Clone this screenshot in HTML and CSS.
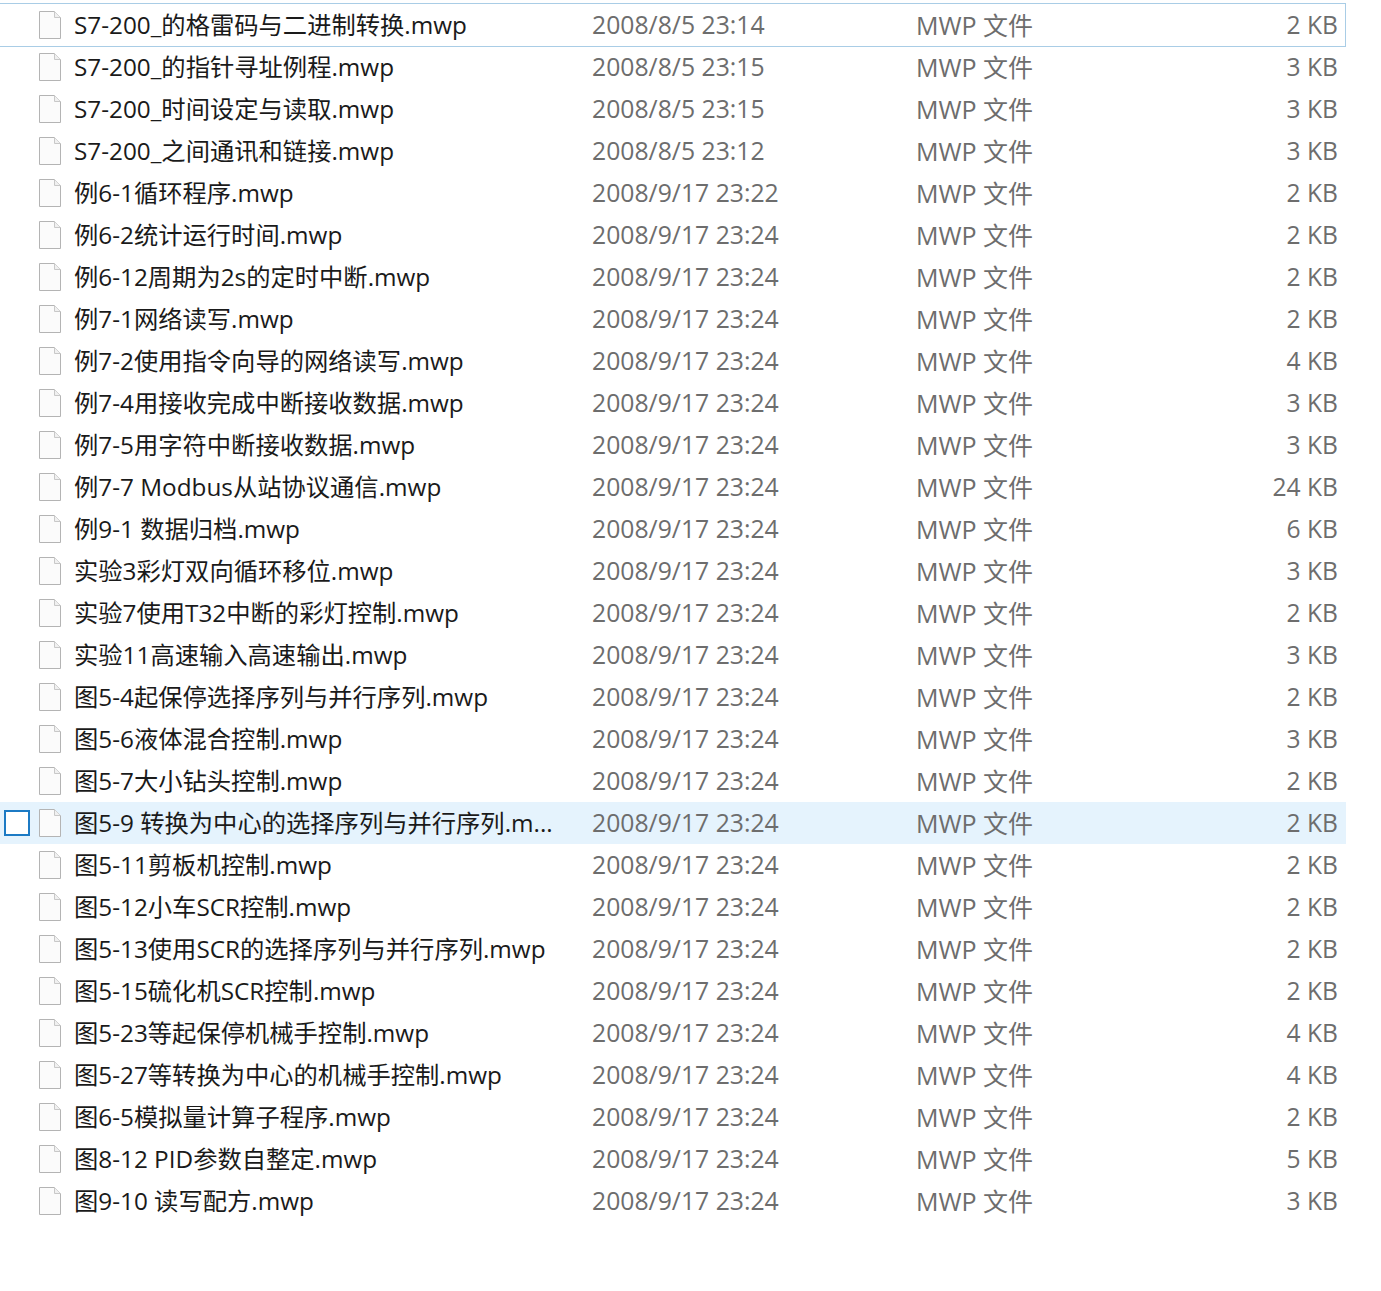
FILE: index.html
```html
<!DOCTYPE html>
<html lang="zh-CN">
<head>
    <meta charset="UTF-8">
    <title>MWP 文件</title>
    <link rel="stylesheet" href="styles.css">
</head>
<body>
    <svg class="defs" width="0" height="0">
        <symbol id="file" viewBox="0 0 22 28">
            <path d="M0.5 0.5H15.5L21.5 6.5V27.5H0.5Z" fill="#fbfbfb" stroke="#b4b4b4"/>
            <path d="M15.5 0.5V6.5H21.5" fill="#f0f0f0" stroke="#c8c8c8"/>
        </symbol>
    </svg>
    <div class="list">
        <div class="row focused"><span class="check"></span><svg class="icon"><use href="#file"/></svg><span class="name">S7-200_的格雷码与二进制转换.mwp</span><span class="date">2008/8/5 23:14</span><span class="type">MWP 文件</span><span class="size">2 KB</span></div>
        <div class="row"><span class="check"></span><svg class="icon"><use href="#file"/></svg><span class="name">S7-200_的指针寻址例程.mwp</span><span class="date">2008/8/5 23:15</span><span class="type">MWP 文件</span><span class="size">3 KB</span></div>
        <div class="row"><span class="check"></span><svg class="icon"><use href="#file"/></svg><span class="name">S7-200_时间设定与读取.mwp</span><span class="date">2008/8/5 23:15</span><span class="type">MWP 文件</span><span class="size">3 KB</span></div>
        <div class="row"><span class="check"></span><svg class="icon"><use href="#file"/></svg><span class="name">S7-200_之间通讯和链接.mwp</span><span class="date">2008/8/5 23:12</span><span class="type">MWP 文件</span><span class="size">3 KB</span></div>
        <div class="row"><span class="check"></span><svg class="icon"><use href="#file"/></svg><span class="name">例6-1循环程序.mwp</span><span class="date">2008/9/17 23:22</span><span class="type">MWP 文件</span><span class="size">2 KB</span></div>
        <div class="row"><span class="check"></span><svg class="icon"><use href="#file"/></svg><span class="name">例6-2统计运行时间.mwp</span><span class="date">2008/9/17 23:24</span><span class="type">MWP 文件</span><span class="size">2 KB</span></div>
        <div class="row"><span class="check"></span><svg class="icon"><use href="#file"/></svg><span class="name">例6-12周期为2s的定时中断.mwp</span><span class="date">2008/9/17 23:24</span><span class="type">MWP 文件</span><span class="size">2 KB</span></div>
        <div class="row"><span class="check"></span><svg class="icon"><use href="#file"/></svg><span class="name">例7-1网络读写.mwp</span><span class="date">2008/9/17 23:24</span><span class="type">MWP 文件</span><span class="size">2 KB</span></div>
        <div class="row"><span class="check"></span><svg class="icon"><use href="#file"/></svg><span class="name">例7-2使用指令向导的网络读写.mwp</span><span class="date">2008/9/17 23:24</span><span class="type">MWP 文件</span><span class="size">4 KB</span></div>
        <div class="row"><span class="check"></span><svg class="icon"><use href="#file"/></svg><span class="name">例7-4用接收完成中断接收数据.mwp</span><span class="date">2008/9/17 23:24</span><span class="type">MWP 文件</span><span class="size">3 KB</span></div>
        <div class="row"><span class="check"></span><svg class="icon"><use href="#file"/></svg><span class="name">例7-5用字符中断接收数据.mwp</span><span class="date">2008/9/17 23:24</span><span class="type">MWP 文件</span><span class="size">3 KB</span></div>
        <div class="row"><span class="check"></span><svg class="icon"><use href="#file"/></svg><span class="name">例7-7 Modbus从站协议通信.mwp</span><span class="date">2008/9/17 23:24</span><span class="type">MWP 文件</span><span class="size">24 KB</span></div>
        <div class="row"><span class="check"></span><svg class="icon"><use href="#file"/></svg><span class="name">例9-1 数据归档.mwp</span><span class="date">2008/9/17 23:24</span><span class="type">MWP 文件</span><span class="size">6 KB</span></div>
        <div class="row"><span class="check"></span><svg class="icon"><use href="#file"/></svg><span class="name">实验3彩灯双向循环移位.mwp</span><span class="date">2008/9/17 23:24</span><span class="type">MWP 文件</span><span class="size">3 KB</span></div>
        <div class="row"><span class="check"></span><svg class="icon"><use href="#file"/></svg><span class="name">实验7使用T32中断的彩灯控制.mwp</span><span class="date">2008/9/17 23:24</span><span class="type">MWP 文件</span><span class="size">2 KB</span></div>
        <div class="row"><span class="check"></span><svg class="icon"><use href="#file"/></svg><span class="name">实验11高速输入高速输出.mwp</span><span class="date">2008/9/17 23:24</span><span class="type">MWP 文件</span><span class="size">3 KB</span></div>
        <div class="row"><span class="check"></span><svg class="icon"><use href="#file"/></svg><span class="name">图5-4起保停选择序列与并行序列.mwp</span><span class="date">2008/9/17 23:24</span><span class="type">MWP 文件</span><span class="size">2 KB</span></div>
        <div class="row"><span class="check"></span><svg class="icon"><use href="#file"/></svg><span class="name">图5-6液体混合控制.mwp</span><span class="date">2008/9/17 23:24</span><span class="type">MWP 文件</span><span class="size">3 KB</span></div>
        <div class="row"><span class="check"></span><svg class="icon"><use href="#file"/></svg><span class="name">图5-7大小钻头控制.mwp</span><span class="date">2008/9/17 23:24</span><span class="type">MWP 文件</span><span class="size">2 KB</span></div>
        <div class="row hover"><span class="check"></span><svg class="icon"><use href="#file"/></svg><span class="name">图5-9 转换为中心的选择序列与并行序列.m...</span><span class="date">2008/9/17 23:24</span><span class="type">MWP 文件</span><span class="size">2 KB</span></div>
        <div class="row"><span class="check"></span><svg class="icon"><use href="#file"/></svg><span class="name">图5-11剪板机控制.mwp</span><span class="date">2008/9/17 23:24</span><span class="type">MWP 文件</span><span class="size">2 KB</span></div>
        <div class="row"><span class="check"></span><svg class="icon"><use href="#file"/></svg><span class="name">图5-12小车SCR控制.mwp</span><span class="date">2008/9/17 23:24</span><span class="type">MWP 文件</span><span class="size">2 KB</span></div>
        <div class="row"><span class="check"></span><svg class="icon"><use href="#file"/></svg><span class="name">图5-13使用SCR的选择序列与并行序列.mwp</span><span class="date">2008/9/17 23:24</span><span class="type">MWP 文件</span><span class="size">2 KB</span></div>
        <div class="row"><span class="check"></span><svg class="icon"><use href="#file"/></svg><span class="name">图5-15硫化机SCR控制.mwp</span><span class="date">2008/9/17 23:24</span><span class="type">MWP 文件</span><span class="size">2 KB</span></div>
        <div class="row"><span class="check"></span><svg class="icon"><use href="#file"/></svg><span class="name">图5-23等起保停机械手控制.mwp</span><span class="date">2008/9/17 23:24</span><span class="type">MWP 文件</span><span class="size">4 KB</span></div>
        <div class="row"><span class="check"></span><svg class="icon"><use href="#file"/></svg><span class="name">图5-27等转换为中心的机械手控制.mwp</span><span class="date">2008/9/17 23:24</span><span class="type">MWP 文件</span><span class="size">4 KB</span></div>
        <div class="row"><span class="check"></span><svg class="icon"><use href="#file"/></svg><span class="name">图6-5模拟量计算子程序.mwp</span><span class="date">2008/9/17 23:24</span><span class="type">MWP 文件</span><span class="size">2 KB</span></div>
        <div class="row"><span class="check"></span><svg class="icon"><use href="#file"/></svg><span class="name">图8-12 PID参数自整定.mwp</span><span class="date">2008/9/17 23:24</span><span class="type">MWP 文件</span><span class="size">5 KB</span></div>
        <div class="row"><span class="check"></span><svg class="icon"><use href="#file"/></svg><span class="name">图9-10 读写配方.mwp</span><span class="date">2008/9/17 23:24</span><span class="type">MWP 文件</span><span class="size">3 KB</span></div>
    </div>
</body>
</html>
```
FILE: styles.css
```css
body {
    font-family: "Open Sans", "Noto Sans CJK SC", sans-serif;
    font-size: 25px;
    background-color: #ffffff;
    margin: 0;
    padding-top: 4px;
}

.defs {
    position: absolute;
}

.list {
    width: 1346px;
}

.row {
    display: flex;
    align-items: center;
    height: 42px;
    box-sizing: border-box;
}

.row.focused {
    height: 44px;
    margin-top: -1px;
    margin-bottom: -1px;
    border: 1px solid #a9cde6;
    border-left: none;
}

.row.hover {
    background-color: #e5f3fd;
}

.check {
    width: 22px;
    height: 22px;
    margin-left: 4px;
    flex: none;
    border: 2px solid transparent;
}

.row.hover .check {
    border-color: #1c7ac4;
    background-color: #ffffff;
}

.icon {
    width: 22px;
    height: 28px;
    margin-left: 9px;
    flex: none;
}

.name,
.date,
.type,
.size {
    padding-bottom: 2px;
    flex: none;
}

.name {
    width: 476px;
    margin-left: 13px;
    padding-bottom: 4px;
    font-size: 24.3px;
    color: #1a1a1a;
    white-space: nowrap;
}

.date {
    width: 324px;
    margin-left: 42px;
    font-size: 24.75px;
    color: #6d6d6d;
}

.type {
    width: 301px;
    color: #6d6d6d;
}

.size {
    width: 121px;
    text-align: right;
    font-size: 24.6px;
    color: #6d6d6d;
}
```
